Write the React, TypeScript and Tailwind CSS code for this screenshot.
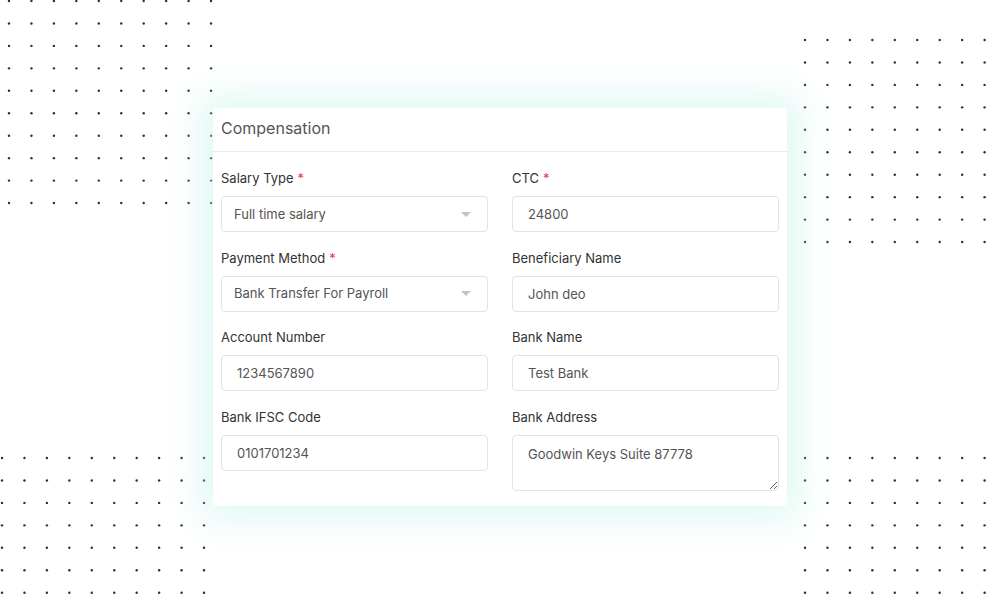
import React from 'react';

const FONT = { fontFamily: 'Inter, "Noto Sans", sans-serif' };

type DotsProps = { cols: number; rows: number; className: string };

// decorative dot grid in the page corners
const DotGrid: React.FC<DotsProps> = ({ cols, rows, className }) => {
  const step = 22.45;
  const w = (cols - 1) * step + 4;
  const h = (rows - 1) * step + 4;
  const dots = [];
  for (let r = 0; r < rows; r++) {
    for (let c = 0; c < cols; c++) {
      dots.push(<circle key={`${r}-${c}`} cx={2 + c * step} cy={2 + r * step} r={1.2} fill="#2f2f2f" />);
    }
  }
  return (
    <svg className={`absolute ${className}`} width={w} height={h} viewBox={`0 0 ${w} ${h}`}>
      {dots}
    </svg>
  );
};

const Label: React.FC<{ text: string; required?: boolean }> = ({ text, required }) => (
  <label className="block text-[13px] leading-[18px] text-[#333] mb-[9px]">
    {text}
    {required && <span className="text-[#e8344e] ml-1">*</span>}
  </label>
);

const SelectBox: React.FC<{ value: string }> = ({ value }) => (
  <div className="h-9 w-full rounded border border-[#dfe3e8] bg-white flex items-center justify-between pl-3 pr-3 text-[13px] text-[#555]">
    <span>{value}</span>
    <span className="w-0 h-0 border-l-[5px] border-r-[5px] border-t-[5px] border-l-transparent border-r-transparent border-t-[#c4c4c4] mr-1" />
  </div>
);

const TextBox: React.FC<{ value: string }> = ({ value }) => (
  <input
    readOnly
    defaultValue={value}
    className="h-9 w-full rounded border border-[#dfe3e8] bg-white px-[15px] text-[13px] text-[#555] outline-none"
    style={FONT}
  />
);

export default function App() {
  return (
    <div className="relative w-[1000px] h-[614px] bg-white overflow-hidden flex items-center justify-center" style={FONT}>
      <DotGrid cols={10} rows={10} className="left-[7px] -top-[1px]" />
      <DotGrid cols={9} rows={10} className="left-[803px] top-[38px]" />
      <DotGrid cols={10} rows={7} className="-left-[0.3px] top-[455.7px]" />
      <DotGrid cols={9} rows={7} className="left-[803px] top-[455.7px]" />

      <div className="relative w-[574px] bg-white rounded-[3px] shadow-[0_0_36px_12px_rgba(196,242,234,0.55)]">
        <div className="h-[44px] flex items-center px-2 pb-[3px] border-b border-[#e9ecef]">
          <h2 className="text-[16px] text-[#555] leading-none">Compensation</h2>
        </div>

        <div className="grid grid-cols-2 gap-x-6 gap-y-[16.5px] px-2 pt-[17px] pb-[15px]">
          <div>
            <Label text="Salary Type" required />
            <SelectBox value="Full time salary" />
          </div>
          <div>
            <Label text="CTC" required />
            <TextBox value="24800" />
          </div>
          <div>
            <Label text="Payment Method" required />
            <SelectBox value="Bank Transfer For Payroll" />
          </div>
          <div>
            <Label text="Beneficiary Name" />
            <TextBox value="John deo" />
          </div>
          <div>
            <Label text="Account Number" />
            <TextBox value="1234567890" />
          </div>
          <div>
            <Label text="Bank Name" />
            <TextBox value="Test Bank" />
          </div>
          <div>
            <Label text="Bank IFSC Code" />
            <TextBox value="0101701234" />
          </div>
          <div>
            <Label text="Bank Address" />
            <textarea
              readOnly
              defaultValue="Goodwin Keys Suite 87778"
              className="block h-[56px] w-full rounded border border-[#dfe3e8] bg-white px-[15px] pt-[9px] text-[13px] text-[#555] outline-none"
              style={FONT}
            />
          </div>
        </div>
      </div>
    </div>
  );
}
